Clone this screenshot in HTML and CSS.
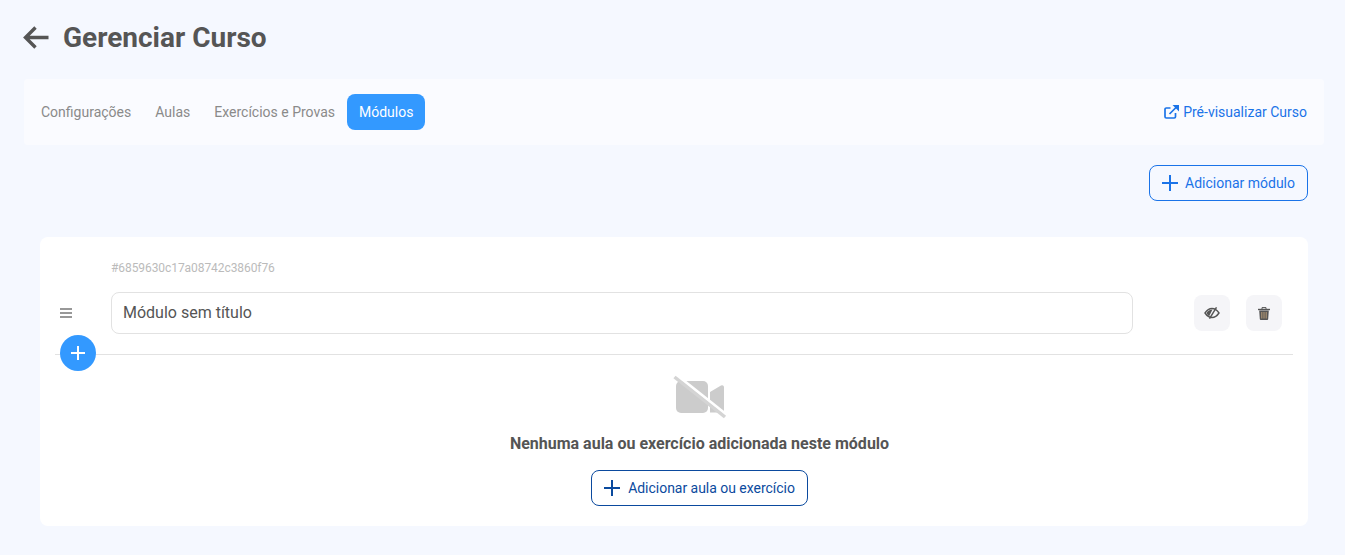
FILE: index.html
```html
<!DOCTYPE html>
<html lang="pt">
<head>
<meta charset="utf-8">
<title>Gerenciar Curso</title>
<link rel="stylesheet" href="styles.css">
</head>
<body>
<header class="page-head">
  <svg class="back" width="26" height="23" viewBox="0 0 26 23"><path d="M25.500 11.500H3M12.500 1.500l-10 10 10 10" fill="none" stroke="#555" stroke-width="3.400"/></svg>
  <h1>Gerenciar Curso</h1>
</header>
<nav class="tabs">
  <div class="tab-list">
    <a class="tab">Configurações</a>
    <a class="tab">Aulas</a>
    <a class="tab">Exercícios e Provas</a>
    <a class="tab active">Módulos</a>
  </div>
  <a class="preview">
    <svg width="15" height="14" viewBox="0 0 15 14" fill="none" stroke="#1a73e8" stroke-width="1.700"><path d="M11.500 8v3.700a1.300 1.300 0 0 1-1.300 1.300H2.300A1.300 1.300 0 0 1 1 11.700V4.300A1.300 1.300 0 0 1 2.300 3H6.500"/><path d="M5.500 9 13 1.500"/><path d="M8.500 0h6.500v6.500z" stroke="none" fill="#1a73e8"/></svg>
    Pré-visualizar Curso
  </a>
</nav>
<div class="actions">
  <button class="btn btn-blue">
    <svg width="16" height="16" viewBox="0 0 16 16"><path d="M8 0v16M0 8h16" stroke="#1a73e8" stroke-width="2"/></svg>
    Adicionar módulo
  </button>
</div>
<section class="card">
  <div class="module-id">#6859630c17a08742c3860f76</div>
  <div class="module-row">
    <svg class="drag" width="14" height="10" viewBox="0 0 14 10"><path d="M1 1h12M1 5h12M1 9h12" stroke="#777" stroke-width="1.500"/></svg>
    <input class="title-input" value="Módulo sem título">
    <div class="tools">
      <button class="tool">
        <svg width="16" height="12" viewBox="0 0 16 12"><path d="M1 6c2-3 4-4.500 7-4.500S13 3 15 6c-2 3-4 4.500-7 4.500S3 9 1 6z" fill="none" stroke="#555" stroke-width="1.400"/><path d="M2.500 6c1.200-2.300 3.500-3.500 6-3.500L5 9.500C4 8.500 3.200 7.300 2.500 6z" fill="#555"/><path d="M12.500 .3 5.500 11.700" stroke="#555" stroke-width="1.400"/></svg>
      </button>
      <button class="tool">
        <svg width="12" height="13" viewBox="0 0 12 13"><path d="M1.200 3.500h9.600l-.6 8.500a1 1 0 0 1-1 1H2.800a1 1 0 0 1-1-1z" fill="#555"/><path d="M0 2.500h12" stroke="#555" stroke-width="1.400"/><path d="M4 2V.6h4V2" fill="none" stroke="#555"/><path d="M3.800 5v6.500M6 5v6.500M8.200 5v6.500" stroke="#ab9272" stroke-width="1.200"/></svg>
      </button>
    </div>
  </div>
  <div class="divider">
    <button class="add-round"><svg width="16" height="16" viewBox="0 0 16 16"><path d="M8 1v14M1 8h14" stroke="#fff" stroke-width="2"/></svg></button>
  </div>
  <div class="empty">
    <svg class="no-video" width="54" height="44" viewBox="0 0 54 44"><path d="M3 11a5 5 0 0 1 5-5h22a5 5 0 0 1 5 5v22a5 5 0 0 1-5 5H8a5 5 0 0 1-5-5z" fill="#ccc"/><path d="M37 17l11-6.500a2 2 0 0 1 3 1.800V36a2 2 0 0 1-3 1.500H37z" fill="#ccc"/><path d="M3.500 0 55 41" stroke="#fff" stroke-width="3"/><path d="M1.500 2 52 42" stroke="#d4d4d4" stroke-width="3.500"/></svg>
    <p class="empty-text">Nenhuma aula ou exercício adicionada neste módulo</p>
    <button class="btn btn-navy">
      <svg width="16" height="16" viewBox="0 0 16 16"><path d="M8 0v16M0 8h16" stroke="#0b4a9e" stroke-width="2"/></svg>
      Adicionar aula ou exercício
    </button>
  </div>
</section>
</body>
</html>
```
FILE: styles.css
```css
* { box-sizing: border-box; }
html, body { margin: 0; height: 555px; overflow: hidden; }
body { background: #f5f8ff; font-family: Roboto, "Liberation Sans", sans-serif; color: #555; padding: 0 21px 0 24px; }
.page-head { display: flex; align-items: center; gap: 14px; height: 79px; padding-bottom: 5px; margin-left: -1px; }
.page-head h1 { margin: 0; font-size: 28px; font-weight: 700; color: #555; }
.tabs { display: flex; justify-content: space-between; align-items: center; height: 66px; background: #fafbff; border-radius: 4px; padding: 0 17px; }
.tab-list { display: flex; align-items: center; }
.tab { font-size: 14px; color: #8a8a8a; padding: 0 12px; line-height: 36px; height: 36px; border-radius: 8px; }
.tab:first-child { padding-left: 0; }
.tab.active { background: #3399ff; color: #fff; }
.preview { display: flex; align-items: center; gap: 4px; font-size: 14px; color: #1a73e8; }
.actions { display: flex; justify-content: flex-end; padding: 20px 16px 36px 0; }
.btn { display: flex; align-items: center; gap: 8px; height: 36px; padding: 0 12px; background: transparent; border-radius: 8px; font: 400 14px Roboto, sans-serif; }
.btn-blue { border: 1px solid #1a73e8; color: #1a73e8; gap: 7px; }
.btn-navy { border: 1px solid #0b4a9e; color: #0b4a9e; background: #fff; letter-spacing: -0.03px; }
.card { margin: 0 16px; height: 289px; background: #fff; border-radius: 8px; padding: 24px 15px 0 15px; }
.module-id { font-size: 12px; color: #bbb; margin-left: 56px; line-height: 14px; letter-spacing: -0.07px; }
.module-row { display: flex; align-items: center; margin: 17px 0 0 4px; }
.drag { margin-right: 38px; }
.title-input { width: 1022px; height: 42px; border: 1px solid #e2e2e2; border-radius: 8px; padding: 0 11px 2px; font: 400 16px Roboto, sans-serif; color: #555; background: #fff; }
.tools { display: flex; gap: 16px; margin-left: 61px; }
.tool { width: 36px; height: 36px; border: 0; border-radius: 8px; background: #f5f5f8; display: flex; align-items: center; justify-content: center; padding: 0; }
.divider { position: relative; height: 1px; background: #e2e2e2; margin-top: 20px; }
.add-round { position: absolute; left: 5px; top: -19px; width: 36px; height: 36px; border: 0; border-radius: 50%; background: #3399ff; display: flex; align-items: center; justify-content: center; padding: 0; }
.empty { display: flex; flex-direction: column; align-items: center; padding-top: 20px; margin-left: 51px; }
.empty-text { margin: 15px 0 17px; font-size: 16px; font-weight: 700; line-height: 19px; color: #555; }
```
